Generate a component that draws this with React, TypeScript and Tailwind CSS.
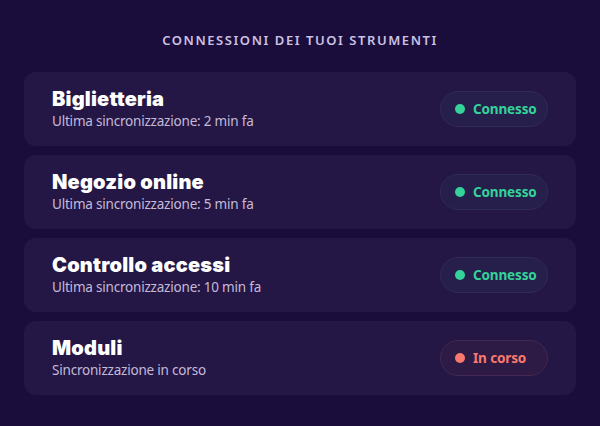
import React from "react";

const items = [
  { name: "Biglietteria", sub: "Ultima sincronizzazione: 2 min fa", ok: true },
  { name: "Negozio online", sub: "Ultima sincronizzazione: 5 min fa", ok: true },
  { name: "Controllo accessi", sub: "Ultima sincronizzazione: 10 min fa", ok: true },
  { name: "Moduli", sub: "Sincronizzazione in corso", ok: false },
];

export default function App() {
  return (
    <div className="w-[600px] h-[426px] bg-[#1a0d3b] px-6 pt-[32px] font-['Noto_Sans',sans-serif]">
      <div className="text-center text-[13px] font-semibold tracking-[0.12em] text-[#cbc1e3] leading-4">
        CONNESSIONI DEI TUOI STRUMENTI
      </div>
      <div className="mt-[24px] flex flex-col gap-[9px]">
        {items.map((it) => (
          <div
            key={it.name}
            className="h-[74px] rounded-xl bg-[#251745] pl-7 pr-7 flex items-center justify-between"
          >
            <div className="flex flex-col">
              <div className="font-['Inter',sans-serif] font-black text-[20px] leading-6 tracking-[0.01em] text-white">
                {it.name}
              </div>
              <div className="text-[13.5px] leading-5 tracking-[-0.015em] text-[#c4bad9]">{it.sub}</div>
            </div>
            {it.ok ? (
              <div className="h-9 w-[108px] rounded-full bg-[#261f4c] border border-[#302a58] flex items-center pl-[14px] gap-2">
                <span className="w-[10px] h-[10px] rounded-full bg-[#34d399]" />
                <span className="text-[13.5px] font-bold tracking-[-0.01em] text-[#34d399]">Connesso</span>
              </div>
            ) : (
              <div className="h-9 w-[108px] rounded-full bg-[#2d1a45] border border-[#43284f] flex items-center pl-[14px] gap-2">
                <span className="w-[10px] h-[10px] rounded-full bg-[#f87a6e]" />
                <span className="text-[13.5px] font-bold tracking-[-0.01em] text-[#f87a6e]">In corso</span>
              </div>
            )}
          </div>
        ))}
      </div>
    </div>
  );
}
